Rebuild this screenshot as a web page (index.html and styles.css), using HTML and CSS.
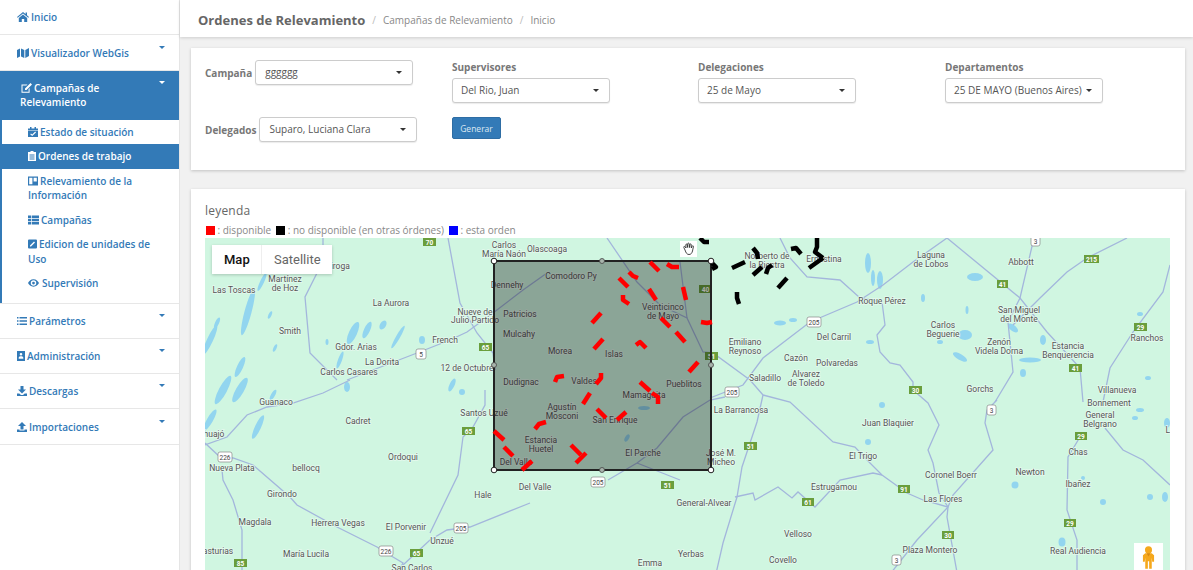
FILE: index.html
```html
<!DOCTYPE html>
<html lang="es">
<head>
<meta charset="utf-8">
<title>Ordenes de Relevamiento</title>
<link rel="stylesheet" href="styles.css">
</head>
<body>
<div class="app">
  <aside class="sidebar">
    <div class="nav-item"><span class="nav-label"><svg class="ic w12" viewBox="0 0 12 10"><path d="M6 0 0 5l.7.8L6 1.5l5.3 4.3.7-.8-2-1.7V.6H8.6v1.3zM1.8 6v4h3V7h2.4v3h3V6L6 2.6z"/></svg>Inicio</span></div>
    <div class="nav-item"><span class="nav-label"><svg class="ic w12" viewBox="0 0 12 10"><path d="M0 2 3 .6v8L0 10zM4 .6 7.3 2v8L4 8.6zM8.3 2 12 0v8l-3.7 2z"/></svg>Visualizador WebGis</span><i class="caret"></i></div>
    <div class="nav-item active"><span class="nav-label indent"><svg class="ic w12" viewBox="0 0 12 10"><path d="M1.5 1.5h6L6.4 2.6H2.5v6.1h6.1V6l1-1v4.7H1.500zM10.500 0 12 1.500 6.500 7H5V5.500z"/></svg>Campañas de Relevamiento</span><i class="caret"></i></div>
    <div class="sub">
      <div class="sub-item"><svg class="ic w10" viewBox="0 0 10 10"><path d="M0 1.500h2V0h1.500v1.500h3V0H8v1.500h2V3H0zM0 3.600h10V10H0zM3 6.500l-.8.800L4.200 9 8 5.400l-.8-.8-3 2.800z" fill-rule="evenodd"/></svg>Estado de situación</div>
      <div class="sub-item current"><svg class="ic w8" viewBox="0 0 8 10"><path d="M2.500 1V0h3v1H8v9H0V1zM1.500 3.500V4.500h5v-1zM1.500 5.500v1h5v-1zM1.500 7.500v1h5v-1z" fill-rule="evenodd"/></svg>Ordenes de trabajo</div>
      <div class="sub-item"><svg class="ic w10" viewBox="0 0 10 10"><path d="M0 .5h10v9H0zM1.200 1.700v6.600h3.200V1.700zM5.600 1.700v3.800h3.200V1.700z" fill-rule="evenodd"/></svg>Relevamiento de la Información</div>
      <div class="sub-item"><svg class="ic w11" viewBox="0 0 11 10"><path d="M0 .5h3v2.500H0zM3.700.5H11v2.500H3.700zM0 3.700h3v2.600H0zM3.700 3.700H11v2.600H3.700zM0 7h3v2.500H0zM3.700 7H11v2.500H3.700z"/></svg>Campañas</div>
      <div class="sub-item"><svg class="ic w9" viewBox="0 0 9 9"><path d="M1 0h7a1 1 0 0 1 1 1v7a1 1 0 0 1-1 1H1a1 1 0 0 1-1-1V1a1 1 0 0 1 1-1zM6 2 2 6v1h1l4-4z" fill-rule="evenodd"/></svg>Edicion de unidades de Uso</div>
      <div class="sub-item"><svg class="ic w11 wide" viewBox="0 0 12 8"><path d="M6 0c3 0 5 2.300 6 4-1 1.700-3 4-6 4S1 5.700 0 4c1-1.700 3-4 6-4zm0 1a3 3 0 1 0 0 6 3 3 0 0 0 0-6zm0 1.500a1.500 1.500 0 1 1 0 3 1.500 1.500 0 0 1 0-3z" fill-rule="evenodd"/></svg>Supervisión</div>
    </div>
    <div class="nav-item ruled"><span class="nav-label"><svg class="ic w10" viewBox="0 0 10 8"><path d="M0 0h1.500v1.500H0zM2.500 0H10v1.500H2.500zM0 3.200h1.500v1.500H0zM2.500 3.200H10v1.500H2.500zM0 6.500h1.500V8H0zM2.500 6.500H10V8H2.500z"/></svg>Parámetros</span><i class="caret"></i></div>
    <div class="nav-item"><span class="nav-label"><svg class="ic w8" viewBox="0 0 8 10"><path d="M0 0h8v10H0zM4 2a1.300 1.300 0 1 0 0 2.600A1.300 1.300 0 0 0 4 2zM1.700 7.800h4.600V6.500L5.200 5.300H2.800L1.700 6.500z" fill-rule="evenodd"/></svg>Administración</span><i class="caret"></i></div>
    <div class="nav-item"><span class="nav-label"><svg class="ic w10" viewBox="0 0 10 10"><path d="M3.500 0h3v3.500H9L5 7.500l-4-4h2.500zM0 7.500h2.300L4 9h2l1.700-1.500H10V10H0z"/></svg>Descargas</span><i class="caret"></i></div>
    <div class="nav-item"><span class="nav-label"><svg class="ic w10" viewBox="0 0 10 10"><path d="M5 0l4 4H6.500v3.500h-3V4H1zM0 7.500h2.500V8.500h5V7.500H10V10H0z"/></svg>Importaciones</span><i class="caret"></i></div>
  </aside>

  <main class="main">
    <header class="topbar">
      <h1 class="page-title">Ordenes de Relevamiento</h1>
      <span class="crumb-sep">/</span><span class="crumb">Campañas de Relevamiento</span>
      <span class="crumb-sep">/</span><span class="crumb">Inicio</span>
    </header>

    <div class="content">
      <section class="card filters">
        <div class="filter-col">
          <div class="inline-field"><span class="field-label">Campaña</span><div class="select"><span>gggggg</span><i class="select-caret"></i></div></div>
          <div class="inline-field second"><span class="field-label">Delegados</span><div class="select"><span>Suparo, Luciana Clara</span><i class="select-caret"></i></div></div>
        </div>
        <div class="filter-col">
          <div class="field-label stacked">Supervisores</div>
          <div class="select"><span>Del Rio, Juan</span><i class="select-caret"></i></div>
          <button class="btn" type="button">Generar</button>
        </div>
        <div class="filter-col">
          <div class="field-label stacked">Delegaciones</div>
          <div class="select"><span>25 de Mayo</span><i class="select-caret"></i></div>
        </div>
        <div class="filter-col">
          <div class="field-label stacked">Departamentos</div>
          <div class="select"><span>25 DE MAYO (Buenos Aires)</span><i class="select-caret"></i></div>
        </div>
      </section>

      <section class="card map-card">
        <h2 class="map-title">leyenda</h2>
        <div class="legend">
          <i class="swatch red"></i><span>: disponible</span>
          <i class="swatch black"></i><span>: no disponible (en otras órdenes)</span>
          <i class="swatch blue"></i><span>: esta orden</span>
        </div>
        <div class="map">
          <svg class="map-canvas" viewBox="205 238 965 340" width="965" height="340">
            <g class="water">
              <ellipse cx="248" cy="312" rx="3.500" ry="24" transform="rotate(15 248 312)"/>
              <ellipse cx="262" cy="282" rx="2" ry="10" transform="rotate(25 262 282)"/>
              <ellipse cx="353" cy="333" rx="4" ry="12" transform="rotate(25 353 333)"/>
              <ellipse cx="367" cy="330" rx="3" ry="9" transform="rotate(25 367 330)"/>
              <ellipse cx="383" cy="325" rx="3" ry="5" transform="rotate(30 383 325)"/>
              <ellipse cx="398" cy="337" rx="2" ry="13" transform="rotate(30 398 337)"/>
              <ellipse cx="422" cy="340" rx="3" ry="4"/>
              <ellipse cx="210" cy="340" rx="3" ry="16" transform="rotate(25 210 340)"/>
              <ellipse cx="217" cy="323" rx="2" ry="6" transform="rotate(25 217 323)"/>
              <ellipse cx="240" cy="367" rx="3" ry="11" transform="rotate(25 240 367)"/>
              <ellipse cx="270" cy="315" rx="1.500" ry="4" transform="rotate(25 270 315)"/>
              <ellipse cx="275" cy="348" rx="1.500" ry="4" transform="rotate(25 275 348)"/>
              <ellipse cx="327" cy="342" rx="1.500" ry="3"/>
              <ellipse cx="340" cy="360" rx="2" ry="9" transform="rotate(20 340 360)"/>
              <ellipse cx="223" cy="390" rx="4" ry="16" transform="rotate(28 223 390)"/>
              <ellipse cx="240" cy="390" rx="4" ry="14" transform="rotate(30 240 390)"/>
              <ellipse cx="210" cy="420" rx="3" ry="12" transform="rotate(30 210 420)"/>
              <ellipse cx="258" cy="427" rx="3" ry="13" transform="rotate(25 258 427)"/>
              <ellipse cx="273" cy="395" rx="2" ry="6" transform="rotate(30 273 395)"/>
              <ellipse cx="347" cy="387" rx="3" ry="5"/>
              <ellipse cx="452" cy="385" rx="2.500" ry="7" transform="rotate(25 452 385)"/>
              <ellipse cx="462" cy="392" rx="3" ry="3"/>
              <ellipse cx="868" cy="263" rx="3" ry="10"/>
              <ellipse cx="880" cy="280" rx="3" ry="9"/>
              <ellipse cx="873" cy="278" rx="2" ry="8"/>
              <ellipse cx="975" cy="277" rx="8" ry="4"/>
              <ellipse cx="965" cy="335" rx="7" ry="5"/>
              <ellipse cx="940" cy="342" rx="3" ry="2"/>
              <ellipse cx="960" cy="357" rx="8" ry="3" transform="rotate(30 960 357)"/>
              <ellipse cx="1043" cy="340" rx="3" ry="5"/>
              <ellipse cx="1013" cy="328" rx="6" ry="3" transform="rotate(40 1013 328)"/>
              <ellipse cx="1030" cy="360" rx="11" ry="2.500"/>
              <ellipse cx="1023" cy="373" rx="3" ry="4"/>
              <ellipse cx="780" cy="323" rx="6" ry="2.500"/>
              <ellipse cx="793" cy="320" rx="4" ry="2"/>
              <ellipse cx="870" cy="342" rx="4" ry="2"/>
              <ellipse cx="923" cy="298" rx="2" ry="4"/>
              <ellipse cx="1148" cy="378" rx="3" ry="2"/>
              <ellipse cx="1140" cy="314" rx="3" ry="2"/>
              <ellipse cx="967" cy="310" rx="1.500" ry="4"/>
              <ellipse cx="1015" cy="485" rx="3.500" ry="3.500"/>
              <ellipse cx="868" cy="442" rx="3" ry="3"/>
              <ellipse cx="1062" cy="542" rx="3.500" ry="4.500"/>
              <ellipse cx="1103" cy="502" rx="3" ry="3"/>
              <ellipse cx="1150" cy="497" rx="3" ry="3"/>
              <ellipse cx="1165" cy="497" rx="3" ry="5"/>
              <ellipse cx="1140" cy="410" rx="4" ry="2"/>
              <ellipse cx="1135" cy="418" rx="3" ry="2"/>
              <ellipse cx="1167" cy="423" rx="3" ry="5"/>
              <ellipse cx="882" cy="405" rx="3" ry="3"/>
              <ellipse cx="1083" cy="478" rx="2" ry="2"/>
              <ellipse cx="644" cy="408" rx="6" ry="2"/>
              <ellipse cx="627" cy="438" rx="2" ry="4" transform="rotate(30 627 438)"/>
            </g>
            <g class="roads">
              <polyline points="323,238 323,252 317,273 305,297 310,353 337,380"/>
              <polyline points="350,380 323,393 293,403 267,407 247,415 227,437 205,445"/>
              <polyline points="205,443 220,457 233,458 253,465 290,497 297,505 337,527 377,547 393,557 403,563 395,578"/>
              <polyline points="222,470 223,480 233,500 242,530 242,578"/>
              <polyline points="347,380 417,353 450,340 467,332 493,313 523,290 547,273"/>
              <polyline points="607,238 637,282 660,305 687,318 703,352 713,353 750,380 763,395"/>
              <polyline points="680,262 687,318"/>
              <polyline points="763,395 757,422 750,443 742,467 737,497 723,543 715,578"/>
              <polyline points="763,395 790,402 833,442 855,447 870,463 882,475 907,493 923,500 948,507 947,517 958,578"/>
              <polyline points="710,398 743,385 763,358 810,322 857,302 883,285 913,262 947,238 1020,298 1047,332 1080,368 1083,402"/>
              <polyline points="882,302 885,325 877,335 880,352 890,363 900,365 913,382 913,390 928,403 939,425 928,450 933,463 939,493 948,507"/>
              <polyline points="997,400 987,410 985,423 993,450 953,495 948,507 917,540 887,578"/>
              <polyline points="1033,242 1020,298 1008,322 1013,372 995,402"/>
              <polyline points="1127,238 1087,258 1067,272 1040,298 1013,325"/>
              <polyline points="1170,265 1163,292 1133,332 1110,368 1103,402"/>
              <polyline points="1105,428 1123,450 1143,460 1170,485"/>
              <polyline points="1080,437 1068,457 1067,510 1077,540 1077,578"/>
              <polyline points="530,503 470,527 447,530 430,540 403,565"/>
              <polyline points="485,390 485,405 473,427 463,437 458,475 430,533"/>
              <polyline points="448,238 460,303 477,333 493,353 495,370"/>
              <polyline points="608,480 637,463 657,448 683,417 710,400 725,397"/>
              <polyline points="637,463 680,480"/>
              <polyline points="735,497 753,493 755,500 778,487 792,498 798,492 815,507 840,480 873,473 882,475"/>
              <polyline points="780,238 790,258 807,277 840,280 860,298 882,302"/>
            </g>
            <g class="labels">
              <text x="504" y="248">Carlos</text><text x="504" y="257">María Naón</text>
              <text x="547" y="252">Olascoaga</text><text x="335" y="269">Quiroga</text>
              <text x="285" y="282">Martínez</text><text x="285" y="291">de Hoz</text>
              <text x="234" y="293">Las Toscas</text><text x="391" y="306">La Aurora</text>
              <text x="475" y="315">Nueve de</text><text x="475" y="323">Julio Partido</text>
              <text x="290" y="334">Smith</text><text x="445" y="343">French</text>
              <text x="356" y="350">Gdor. Arias</text><text x="382" y="365">La Dorita</text>
              <text x="349" y="375">Carlos Casares</text><text x="467" y="371">12 de Octubre</text>
              <text x="276" y="405">Guanaco</text><text x="358" y="424">Cadret</text>
              <text x="484" y="416">Santos Uzué</text><text x="214" y="437">huajó</text>
              <text x="232" y="471">Nueva Plata</text><text x="306" y="471">bellocq</text>
              <text x="403" y="460">Ordoqui</text><text x="282" y="497">Girondo</text>
              <text x="483" y="498">Hale</text><text x="535" y="490">Del Valle</text>
              <text x="255" y="525">Magdala</text><text x="338" y="526">Herrera Vegas</text>
              <text x="406" y="530">El Porvenir</text><text x="442" y="544">Unzué</text>
              <text x="218" y="554">asturias</text><text x="306" y="557">María Lucila</text>
              <text x="412" y="571">San Carlos</text><text x="650" y="566">Emma</text>
              <text x="691" y="557">Yerbas</text><text x="704" y="506">General-Alvear</text>
              <text x="571" y="279">Comodoro Py</text><text x="507" y="288">Dennehy</text>
              <text x="520" y="317">Patricios</text><text x="519" y="337">Mulcahy</text>
              <text x="560" y="354">Morea</text><text x="614" y="357">Islas</text>
              <text x="663" y="310">Veinticinco</text><text x="663" y="319">de Mayo</text>
              <text x="521" y="385">Dudignac</text><text x="584" y="384">Valdes</text>
              <text x="684" y="387">Pueblitos</text><text x="644" y="398">Mamaguita</text>
              <text x="562" y="410">Agustín</text><text x="562" y="419">Mosconi</text>
              <text x="615" y="423">San Enrique</text>
              <text x="541" y="443">Estancia</text><text x="541" y="452">Huetel</text>
              <text x="516" y="465">Del Valle</text><text x="643" y="456">El Parche</text>
              <text x="721" y="456">José M.</text><text x="721" y="465">Micheo</text>
              <text x="741" y="413">La Barrancosa</text>
              <text x="745" y="345">Emiliano</text><text x="745" y="354">Reynoso</text>
              <text x="765" y="381">Saladillo</text><text x="796" y="361">Cazón</text>
              <text x="806" y="377">Alvarez</text><text x="806" y="386">de Toledo</text>
              <text x="837" y="366">Polvaredas</text><text x="834" y="340">Del Carril</text>
              <text x="767" y="259">Norberto de</text><text x="767" y="268">la Riestra</text>
              <text x="824" y="262">Ernestina</text>
              <text x="931" y="258">Laguna</text><text x="931" y="267">de Lobos</text>
              <text x="1021" y="265">Abbott</text><text x="882" y="304">Roque Pérez</text>
              <text x="943" y="328">Carlos</text><text x="943" y="337">Beguerie</text>
              <text x="1019" y="313">San Miguel</text><text x="1019" y="322">del Monte</text>
              <text x="999" y="345">Zenón</text><text x="999" y="354">Videla Dorna</text>
              <text x="1068" y="349">Estancia</text><text x="1068" y="358">Benquerencia</text>
              <text x="1147" y="341">Ranchos</text><text x="980" y="392">Gorchs</text>
              <text x="1117" y="393">Villanueva</text><text x="1109" y="406">Bonnement</text>
              <text x="1100" y="418">General</text><text x="1100" y="427">Belgrano</text>
              <text x="888" y="426">Juan Blaquier</text><text x="863" y="459">El Trigo</text>
              <text x="1078" y="455">Chas</text><text x="951" y="478">Coronel Boerr</text>
              <text x="1030" y="475">Newton</text><text x="1078" y="487">Ibañez</text>
              <text x="834" y="490">Estrugamou</text><text x="943" y="502">Las Flores</text>
              <text x="798" y="537">Velloso</text><text x="930" y="553">Plaza Montero</text>
              <text x="1078" y="554">Real Audiencia</text><text x="783" y="563">Covello</text>
              <text x="1170" y="433">La</text>
            </g>
            <g class="shields-green">
              <rect x="423" y="238" width="13" height="8"/><text x="429.500" y="245">70</text>
              <rect x="479" y="343" width="13" height="8"/><text x="485.500" y="350">65</text>
              <rect x="462" y="427" width="13" height="8"/><text x="468.500" y="434">65</text>
              <rect x="410" y="549" width="13" height="8"/><text x="416.500" y="556">65</text>
              <rect x="234" y="559" width="13" height="8"/><text x="240.500" y="566">85</text>
              <rect x="699" y="285" width="13" height="8"/><text x="705.500" y="292">40</text>
              <rect x="705" y="352" width="13" height="8"/><text x="711.500" y="359">51</text>
              <rect x="744" y="442" width="13" height="8"/><text x="750.500" y="449">51</text>
              <rect x="661" y="481" width="13" height="8"/><text x="667.500" y="488">51</text>
              <rect x="997" y="280" width="11" height="8"/><text x="1002.500" y="287">41</text>
              <rect x="1084" y="255" width="15" height="8"/><text x="1091.500" y="262">215</text>
              <rect x="1134" y="323" width="13" height="8"/><text x="1140.500" y="330">29</text>
              <rect x="1069" y="364" width="13" height="8"/><text x="1075.500" y="371">41</text>
              <rect x="909" y="386" width="13" height="8"/><text x="915.500" y="393">30</text>
              <rect x="1075" y="432" width="12" height="8"/><text x="1081" y="439">29</text>
              <rect x="898" y="485" width="12" height="8"/><text x="904" y="492">91</text>
              <rect x="802" y="498" width="12" height="8"/><text x="808" y="505">61</text>
              <rect x="942" y="531" width="12" height="8"/><text x="948" y="538">30</text>
              <rect x="1064" y="519" width="12" height="8"/><text x="1070" y="526">29</text>
            </g>
            <g class="shields-white">
              <rect x="416" y="349" width="10" height="10" rx="2"/><text x="421" y="357">5</text>
              <rect x="218" y="452" width="14" height="10" rx="2"/><text x="225" y="460">226</text>
              <rect x="379" y="546" width="14" height="10" rx="2"/><text x="386" y="554">226</text>
              <rect x="454" y="523" width="14" height="10" rx="2"/><text x="461" y="531">205</text>
              <rect x="591" y="477" width="14" height="10" rx="2"/><text x="598" y="485">205</text>
              <rect x="725" y="387" width="14" height="10" rx="2"/><text x="732" y="395">205</text>
              <rect x="807" y="317" width="14" height="10" rx="2"/><text x="814" y="325">205</text>
              <rect x="1031" y="236" width="9" height="10" rx="2"/><text x="1035.500" y="244">3</text>
              <rect x="987" y="405" width="9" height="10" rx="2"/><text x="991.500" y="413">3</text>
              <rect x="892" y="555" width="9" height="10" rx="2"/><text x="896.500" y="563">3</text>
            </g>
            <rect class="area" x="494" y="261" width="217" height="209"/>
            <g class="segments red-seg">
              <polyline points="650,262 659,271"/><polyline points="667,264 672,267 679,267"/>
              <polyline points="619,278 628,287"/><polyline points="629,272 633,276 638,278"/>
              <polyline points="649,289 656,300"/><polyline points="683,287 686,300"/>
              <polyline points="623,295 623,300 629,304"/><polyline points="601,313 592,323"/>
              <polyline points="661,318 670,327"/><polyline points="676,332 685,342"/>
              <polyline points="701,322 707,323 712,322"/><polyline points="603,339 594,349"/>
              <polyline points="636,345 640,342 646,348"/><polyline points="698,362 689,372"/>
              <polyline points="555,382 557,377 564,376"/><polyline points="601,373 601,378 596,384"/>
              <polyline points="640,382 650,391"/><polyline points="652,393 658,397 658,404"/>
              <polyline points="590,393 583,404"/><polyline points="597,409 606,418"/>
              <polyline points="626,412 617,420"/><polyline points="546,422 539,424 535,429"/>
              <polyline points="494,431 504,440"/><polyline points="504,447 513,456"/>
              <polyline points="532,461 522,470"/><polyline points="571,445 581,455"/>
              <polyline points="586,453 576,463"/>
            </g>
            <g class="segments black-seg">
              <polyline points="700,238 704,242 709,242"/><polyline points="712,263 716,267 712,269"/>
              <polyline points="732,268 745,262"/><polyline points="753,248 757,253 758,259"/>
              <polyline points="753,275 762,267"/><polyline points="766,274 768,268 772,265"/>
              <polyline points="778,288 787,278"/><polyline points="737,292 737,298 739,304"/>
              <polyline points="791,249 796,248 801,254"/>
              <polyline points="817,238 817,247 815,252 823,258"/><polyline points="823,258 809,268"/>
            </g>
            <g class="handle-mid">
              <circle cx="602" cy="261" r="2.500"/><circle cx="711" cy="365" r="2.500"/>
              <circle cx="602" cy="470" r="2.500"/><circle cx="494" cy="365" r="2.500"/>
            </g>
            <g class="handle-corner">
              <circle cx="494" cy="261" r="2.800"/><circle cx="711" cy="261" r="2.800"/>
              <circle cx="494" cy="470" r="2.800"/><circle cx="711" cy="470" r="2.800"/>
            </g>
          </svg>
          <div class="map-types"><span class="map-type selected">Map</span><span class="map-type">Satellite</span></div>
          <div class="hand"><svg viewBox="0 0 14 14" width="14" height="14"><path d="M3 8 1.800 5.500c-.5-1 .7-1.500 1.300-.7L4 6 3.800 2.800c0-1 1.300-1 1.400 0L5.700 5.500 5.700 1.800c0-1 1.400-1 1.500 0l.3 3.700.4-3c.2-1 1.400-.8 1.300.2L9.300 6l.8-1.800c.4-.9 1.600-.5 1.300.5L10.500 9c-.5 2-1.500 3.500-3.500 3.500-2 0-3-1.500-4-4.500z"/></svg></div>
          <div class="pegman"><svg viewBox="0 0 14 24" width="13" height="23"><circle cx="7" cy="3.800" r="3.800" fill="#f5a81c"/><path d="M3.500 7.500h7l2.500 2v7h-2L10.500 12v12H7.700v-8H6.300v8H3.500V12L3 16.500H1v-7z" fill="#f5a81c"/><path d="M5 7.500 7 11l2-3.500z" fill="#d98a10"/></svg></div>
        </div>
      </section>
    </div>
  </main>
</div>
</body>
</html>
```
FILE: styles.css
```css
* { box-sizing: border-box; }
html, body { height: 100%; margin: 0; overflow: hidden; }
body { font-family: "Open Sans", "Liberation Sans", sans-serif; background: #f1f1f1; color: #666; }
.app { display: flex; height: 100%; }

.sidebar { flex: 0 0 180px; background: #fff; border-right: 1px solid #e5e5e5; font-size: 10px; font-weight: 600; line-height: 14.5px; color: #337ab7; }
.nav-item { display: flex; justify-content: space-between; align-items: flex-start; padding: 10.25px 14px 9.5px 17px; border-bottom: 1px solid #e7e7e7; }
.nav-item.ruled { border-top: 1px solid #e7e7e7; padding-top: 10.25px; }
.nav-item.active { background: #337ab7; color: #fff; border-bottom: 0; width: 179px; padding-top: 10.25px; padding-bottom: 9.75px; }
.nav-label { flex: 1; }
.nav-label.indent { padding-left: 3px; padding-right: 30px; }
.ic { display: inline-block; height: 10px; fill: currentColor; margin-right: 2px; vertical-align: top; margin-top: 2px; }
.w8 { width: 8px; } .w9 { width: 9px; } .w10 { width: 10px; } .w11 { width: 11px; } .w12 { width: 12px; }
.wide { margin-right: 3px; }
.caret { flex: none; width: 0; height: 0; border: 3px solid transparent; border-top-color: currentColor; border-bottom: 0; margin-left: 4px; }
.sub { border-left: 2px solid #337ab7; padding-bottom: 7px; }
.sub-item { padding: 5px 10px 5px 26px; }
.sub-item.current { background: #337ab7; color: #fff; width: 177px; }

.main { flex: 1; min-width: 0; display: flex; flex-direction: column; }
.topbar { flex: none; height: 37px; background: #fff; box-shadow: 0 1px 3px rgba(0,0,0,.15); display: flex; align-items: center; padding: 3px 0 0 18px; }
.page-title { margin: 0; font-size: 13px; font-weight: 700; color: #666; }
.crumb-sep { margin: 0 7px; font-size: 10px; color: #bbb; }
.crumb { font-size: 10px; color: #888; }
.content { padding: 11px 8px 0 11px; display: flex; flex-direction: column; gap: 19px; }

.card { background: #fff; box-shadow: 0 1px 3px rgba(0,0,0,.2); }
.filters { display: grid; grid-template-columns: 247px 246px 247px 1fr; padding: 12px 14px 28px; }
.filter-col { display: flex; flex-direction: column; align-items: flex-start; }
.inline-field { display: flex; align-items: center; gap: 3px; }
.inline-field.second { margin-top: 32px; }
.field-label { font-size: 10px; font-weight: 700; color: #777; }
.field-label.stacked { line-height: 14px; margin-bottom: 4px; }
.select { width: 158px; height: 25px; display: flex; align-items: center; justify-content: space-between; padding: 0 10px 1px 9px; background: #fff; border: 1px solid #ccc; border-radius: 3px; box-shadow: 0 1px 1px rgba(0,0,0,.08); font-size: 10px; color: #555; white-space: nowrap; }
.filter-col > .select { padding-left: 8px; }
.select-caret { flex: none; width: 0; height: 0; border: 3px solid transparent; border-top: 3px solid #333; border-bottom: 0; margin-left: 4px; }
.btn { margin-top: 14px; width: 49px; height: 22px; padding: 0; background: #337ab7; border: 1px solid #2e6da4; border-radius: 2px; color: #dbe8f3; font: 8.500px "Open Sans", sans-serif; }

.map-card { padding: 14px 0 0 14px; flex: 1; }
.map-title { margin: 0; font-size: 12px; font-weight: 400; line-height: 16px; color: #666; letter-spacing: .2px; }
.legend { display: flex; align-items: center; height: 16px; margin-top: 3px; font-size: 10px; color: #888; padding-left: 1px; }
.legend span { margin-right: 5px; margin-left: 2.5px; }
.swatch { width: 9px; height: 9px; }
.red { background: #f00; } .black { background: #000; } .blue { background: #00f; }

.map { position: relative; width: 965px; height: 340px; overflow: hidden; background: #d0f6e1; }
.map-canvas { display: block; }
.water { fill: #92d5ef; }
.roads { fill: none; stroke: #a3b6dc; stroke-width: 1.300; }
.labels text { font: 8.500px Roboto, sans-serif; fill: #555; text-anchor: middle; paint-order: stroke; stroke: #e6f9ef; stroke-width: 1.500px; }
.shields-green rect { fill: #6a9e3c; }
.shields-green text { font: 700 6.500px Roboto, sans-serif; fill: #fff; text-anchor: middle; }
.shields-white rect { fill: #fff; stroke: #888; stroke-width: .7; }
.shields-white text { font: 6.500px Roboto, sans-serif; fill: #444; text-anchor: middle; }
.area { fill: rgba(0,0,0,.33); stroke: #222; stroke-width: 2; }
.segments polyline { fill: none; stroke-width: 4.500; stroke-linejoin: round; }
.red-seg polyline { stroke: #f00; }
.black-seg polyline { stroke: #000; }
.handle-mid circle { fill: #a9b5ad; stroke: #444; stroke-width: .8; }
.handle-corner circle { fill: #fff; stroke: #222; stroke-width: 1; }

.map-types { position: absolute; left: 7px; top: 7px; height: 29px; display: flex; background: #fff; box-shadow: 0 1px 3px rgba(0,0,0,.2); font: 13px Roboto, sans-serif; color: #666; }
.map-type { display: flex; align-items: center; padding: 0 11px 0 12px; }
.map-type.selected { width: 50px; color: #111; font-weight: 500; border-right: 1px solid #eee; }
.hand { position: absolute; left: 475px; top: 3px; width: 17px; height: 16px; background: #fff; display: flex; align-items: center; justify-content: center; }
.hand svg { fill: #fff; stroke: #333; stroke-width: .9; }
.pegman { position: absolute; left: 929px; top: 305px; width: 29px; height: 35px; background: #fff; padding: 3px 8px; }
```
